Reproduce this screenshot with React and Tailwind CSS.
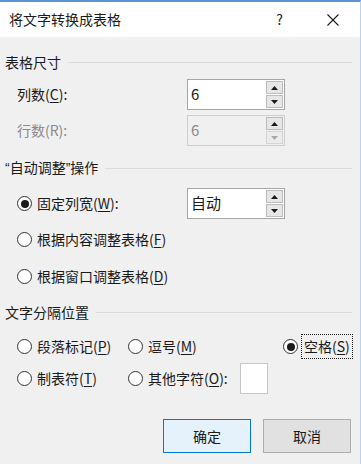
import React from "react";

const font = { fontFamily: '"Noto Sans CJK SC", "Noto Sans", sans-serif' };

function Radio({ checked }) {
  return (
    <span className="w-[15px] h-[15px] shrink-0 rounded-full border border-[#333] bg-white flex items-center justify-center">
      {checked && <span className="w-[8px] h-[8px] rounded-full bg-[#1a1a1a]" />}
    </span>
  );
}

function Key({ children }) {
  return <u className="underline underline-offset-2">{children}</u>;
}

function Quote({ children }) {
  return <span className="font-['Liberation_Sans',sans-serif]">{children}</span>;
}

function GroupTitle({ children }) {
  return (
    <div className="flex items-center h-5 pl-[5px] pr-[8px]">
      <span className="text-[14px] text-[#1a1a1a] whitespace-nowrap">{children}</span>
      <div className="flex-1 h-px bg-[#dcdcdc] ml-[7px]" />
    </div>
  );
}

function Arrow({ up, color }) {
  return (
    <svg width="7" height="4" viewBox="0 0 7 4">
      {up ? <path d="M0 4 L3.5 0 L7 4 Z" fill={color} /> : <path d="M0 0 L3.5 4 L7 0 Z" fill={color} />}
    </svg>
  );
}

function SpinBox({ value, disabled }) {
  return (
    <div
      className={`w-[98px] h-[31px] flex border ${
        disabled ? "border-[#cfcfcf] bg-[#f0f0f0]" : "border-[#a6a6a6] bg-white"
      }`}
    >
      <div className={`flex-1 flex items-center pl-[3px] text-[15px] ${disabled ? "text-[#8a8a8a]" : "text-[#1a1a1a]"}`}>
        {value}
      </div>
      <div className="w-[17px] flex flex-col gap-px py-px mr-px">
        <div className="flex-1 flex items-center justify-center bg-[#e6e6e6] border border-[#bcbcbc]">
          <Arrow up color="#1a1a1a" />
        </div>
        <div
          className={`flex-1 flex items-center justify-center border ${
            disabled ? "bg-[#ececec] border-[#d4d4d4]" : "bg-[#e6e6e6] border-[#bcbcbc]"
          }`}
        >
          <Arrow color={disabled ? "#a8a8a8" : "#1a1a1a"} />
        </div>
      </div>
    </div>
  );
}

function RadioItem({ checked, children, className = "" }) {
  return (
    <div className={`flex items-center gap-[5px] ${className}`}>
      <Radio checked={checked} />
      <span className="text-[14px] text-[#1a1a1a] whitespace-nowrap">{children}</span>
    </div>
  );
}

export default function App() {
  return (
    <div className="w-[361px] h-[464px] flex flex-col bg-[#f0f0f0] border-t-2 border-t-[#5b92d6] border-r border-r-[#b9d3ee] overflow-hidden" style={font}>
      {/* title bar */}
      <div className="h-[35px] bg-white flex items-center pl-[9px] pr-[21px] text-[#1a1a1a]">
        <span className="text-[14px] flex-1">将文字转换成表格</span>
        <span className="text-[14px] mr-[44px]">?</span>
        <svg width="12" height="12" viewBox="0 0 12 12">
          <path d="M0.5 0.5 L11.5 11.5 M11.5 0.5 L0.5 11.5" stroke="#1a1a1a" strokeWidth="1.1" />
        </svg>
      </div>

      <div className="mt-[15px]">
        <GroupTitle>表格尺寸</GroupTitle>
      </div>

      <div className="mt-[7px] flex items-center h-[31px] pl-[17px]">
        <span className="w-[170px] text-[14px] text-[#1a1a1a]">
          列数(<Key>C</Key>):
        </span>
        <SpinBox value="6" />
      </div>

      <div className="mt-[5px] flex items-center h-[31px] pl-[17px]">
        <span className="w-[170px] text-[14px] text-[#8a8a8a]">行数(R):</span>
        <SpinBox value="6" disabled />
      </div>

      <div className="mt-[12px]">
        <GroupTitle>
          <Quote>“</Quote>自动调整<Quote>”</Quote>操作
        </GroupTitle>
      </div>

      <div className="mt-[10px] flex items-center h-[31px] pl-[17px]">
        <RadioItem checked className="w-[170px]">
          固定列宽(<Key>W</Key>):
        </RadioItem>
        <SpinBox value="自动" />
      </div>

      <div className="mt-[10px] flex items-center h-5 pl-[17px]">
        <RadioItem>
          根据内容调整表格(<Key>F</Key>)
        </RadioItem>
      </div>

      <div className="mt-[17px] flex items-center h-5 pl-[17px]">
        <RadioItem>
          根据窗口调整表格(<Key>D</Key>)
        </RadioItem>
      </div>

      <div className="mt-[16px]">
        <GroupTitle>文字分隔位置</GroupTitle>
      </div>

      <div className="mt-[12px] flex items-center h-[25px] pl-[17px]">
        <RadioItem className="w-[111px]">
          段落标记(<Key>P</Key>)
        </RadioItem>
        <RadioItem className="w-[155px]">
          逗号(<Key>M</Key>)
        </RadioItem>
        <div className="flex items-center gap-[3px]">
          <Radio checked />
          <span className="h-[25px] flex items-center px-[2px] border border-dotted border-[#1a1a1a] text-[14px] text-[#1a1a1a]">
            空格(<Key>S</Key>)
          </span>
        </div>
      </div>

      <div className="mt-[4px] flex items-center h-[31px] pl-[17px]">
        <RadioItem className="w-[111px]">
          制表符(<Key>T</Key>)
        </RadioItem>
        <RadioItem>
          其他字符(<Key>O</Key>):
        </RadioItem>
        <div className="ml-[12px] w-[28px] h-[31px] bg-white border border-[#c8c8c8]" />
      </div>

      <div className="mt-[25px] flex justify-end gap-3 pr-[9px]">
        <button className="w-[88px] h-[34px] bg-[#e5f1fb] border border-[#0078d7] text-[14px] text-[#1a1a1a]">
          确定
        </button>
        <button className="w-[88px] h-[34px] bg-[#e1e1e1] border border-[#adadad] text-[14px] text-[#1a1a1a]">
          取消
        </button>
      </div>
    </div>
  );
}
